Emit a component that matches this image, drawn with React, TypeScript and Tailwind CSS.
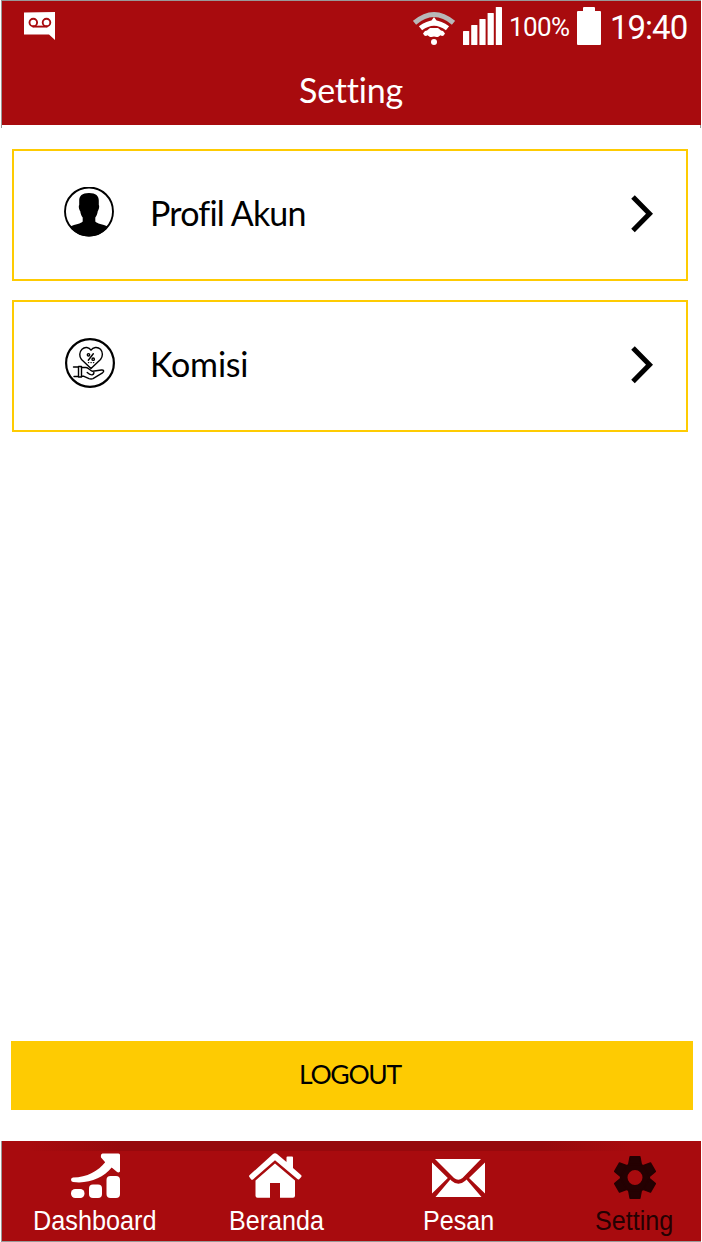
import type { ReactNode } from "react";

function Voicemail() {
  return (
    <svg width="32" height="28" viewBox="0 0 32 28" className="shrink-0">
      <path d="M0 .6L31 0V28l-6-5.4H0z" fill="#fff" />
      <g fill="none" stroke="#a80b0e" strokeWidth="1.9">
        <circle cx="9.300" cy="10.500" r="3.800" />
        <circle cx="22.500" cy="10.500" r="3.800" />
        <path d="M8.500 14.600h15" />
      </g>
    </svg>
  );
}

function Wifi() {
  return (
    <svg width="42" height="35" viewBox="0 0 42 35" className="shrink-0">
      <path d="M1.500 11.800Q21-4.800 40.500 11.800" fill="none" stroke="#b8b8b8" strokeWidth="5" />
      <path d="M7.500 17.300Q21 6.800 34.500 17.300" fill="none" stroke="#fff" strokeWidth="5.200" />
      <path d="M21 6l5 7h-10z" fill="#fff" />
      <path d="M17 17h8l3 2.500 2 .5 2 2.500q-2 4-4.500 1.800l-2.500 1.700h-1.500L21 25.500 18.500 26H17l-2.500-1.700q-2.500 2.200-4.500-1.800l2-2.500 2-.5z" fill="#fff" />
      <circle cx="21" cy="31" r="3" fill="#fff" />
    </svg>
  );
}

function Signal() {
  return (
    <svg width="39" height="38" viewBox="0 0 39 38" fill="#fff" className="ml-2 shrink-0">
      <rect x="0" y="24" width="6.200" height="14" rx=".6" />
      <rect x="8.200" y="18" width="6.200" height="20" rx=".6" />
      <rect x="16.400" y="12" width="6.200" height="26" rx=".6" />
      <rect x="24.600" y="6" width="6.200" height="32" rx=".6" />
      <rect x="32.800" y="0" width="6.200" height="38" rx=".6" />
    </svg>
  );
}

function Battery() {
  return (
    <svg width="24" height="38" viewBox="0 0 24 38" className="ml-2 shrink-0">
      <path d="M1 4h5V1q0-1 1-1h10q1 0 1 1v3h5q1 0 1 1v32q0 1-1 1H1q-1 0-1-1V5q0-1 1-1z" fill="#fff" />
    </svg>
  );
}

function Profile() {
  return (
    <svg width="50" height="50" viewBox="0 0 50 50">
      <circle cx="25" cy="24.500" r="24" fill="#fff" stroke="#000" strokeWidth="1.900" />
      <path
        d="M25 6c7 0 9.800 3 9.800 7.500v4.500c.8.700.3 4.700-1 6-.4 3-1.200 5-2.500 6.500v4c1.300 2 7.700 2.800 12.500 5C39.500 46 33 49.400 25 49.400S10.500 46 6.200 39.500c4.800-2.200 11.200-3 12.500-5v-4c-1.300-1.500-2.100-3.500-2.500-6.500-1.300-1.300-1.800-5.300-1-6v-4.500c0-4.500 2.800-7.500 9.800-7.500z"
        fill="#000"
      />
    </svg>
  );
}

function Commission() {
  return (
    <svg width="50" height="50" viewBox="0 0 50 50" fill="none" stroke="#000" strokeLinejoin="round" strokeLinecap="round" className="ml-px">
      <circle cx="25" cy="25" r="23.900" strokeWidth="2.200" />
      <path d="M26 30.500L16.500 21.500C14 18.500 14.200 14 17 11.200c3-2.800 7-2 9 1 2-3 6.500-3.800 9.500-1 2.500 2.800 2.500 7.300 0 10.300z" strokeWidth="1.400" />
      <g strokeWidth="1.400">
        <path d="M28.300 15.800l-5 6.400" />
        <circle cx="23.500" cy="16.800" r="1.200" />
        <circle cx="28.200" cy="21.200" r="1.200" />
        <path d="M23.500 24.600h.2M26 24.600h.2M28.500 24.600h.2" />
        <path d="M8.500 29h5M9 38.500h4.500M13.500 28.500h3v10.500h-3z" />
        <path d="M16.500 29.500h4.500c2.500 0 4.500 3.500 6.700 3.700 1.800.2 1.700 3.200-.5 3.600-2 .3-3.800-1-5-2.200M16.500 38.300h2.500l5 2.300c1.500.5 2.700.5 4 0l9.500-5.800c2-1.600 1.300-3-1-2.800l-9 1.200" />
      </g>
    </svg>
  );
}

function Chevron() {
  return (
    <svg width="24" height="40" viewBox="0 0 24 40" fill="none" stroke="#000" strokeWidth="5">
      <path d="M3 3L19.500 19.700 3 36.500" />
    </svg>
  );
}

function MenuCard({ icon, label, labelClass }: { icon: ReactNode; label: string; labelClass: string }) {
  return (
    <button className="flex h-[132px] w-full items-start border-2 border-[#fecb02] bg-white pl-[50px] pr-8 text-left">
      <span className="mt-9 w-[51px]">{icon}</span>
      <span className={labelClass}>{label}</span>
      <span className="ml-auto mt-[43px]">
        <Chevron />
      </span>
    </button>
  );
}

function Growth() {
  return (
    <svg width="50" height="46" viewBox="0 0 50 46" fill="#fff">
      <path d="M31.500.5H47.500q1.500 0 1.500 1.500v16.500q-1.500 1.800-3.200.3L40.700 14.600C32 25 18 31 2 29q-2-.2-2-2.200t2-2.200c14-.2 25.500-7 32.200-15.400L30 4.500q-.6-3.300 1.500-4z" />
      <rect y="36" width="13.500" height="9" rx="4.200" />
      <rect x="18" y="31.500" width="13" height="13.500" rx="4" />
      <rect x="35.500" y="23" width="13.500" height="22" rx="4" />
    </svg>
  );
}

function Home() {
  return (
    <svg width="53" height="46" viewBox="0 0 53 46" fill="#fff">
      <path d="M26 .3q1 0 2 .8l9.500 8V4.500q0-1 1-1H43q1 0 1 1v10.500l8 7q1 .9.200 2l-1.800 2q-1 1-2 .1L26 7.200 4 26.500q-1 .8-2-.2L.4 24q-.8-1 .3-2L24 1.100q1-.8 2-.8z" />
      <path d="M26 10.500L46 27.500v15.200q0 2-2 2H31V30H21v14.700H8.500q-2 0-2-2V27.500z" />
    </svg>
  );
}

function Mail() {
  return (
    <svg width="53" height="38" viewBox="0 0 53 38" fill="#fff">
      <path d="M3 0h46L30.500 19q-4.200 3.500-8.500 0zM0 3.500L15.800 19 0 34.500zM53 3.500L37 19l16 15.500zM18.300 20.500l1.200 1.200q6.900 6.200 13.800 0l1.200-1.200L49.500 38H3.500z" />
    </svg>
  );
}

function Gear() {
  return (
    <svg width="42" height="43" viewBox="-21 -21.5 42 43" fill="#240102" stroke="#240102" strokeLinejoin="round">
      <circle r="11.300" fill="none" strokeWidth="7.600" />
      <path
        d="M-6.300-13L-4.900-20.700H4.900L6.300-13zM-6.300 13L-4.900 20.700H4.900L6.300 13z"
        strokeWidth="1.400"
      />
      <path
        d="M-6.300-13L-4.900-20.700H4.900L6.300-13zM-6.300 13L-4.900 20.700H4.900L6.300 13z"
        strokeWidth="1.400"
        transform="rotate(60)"
      />
      <path
        d="M-6.300-13L-4.900-20.700H4.900L6.300-13zM-6.300 13L-4.900 20.700H4.900L6.300 13z"
        strokeWidth="1.400"
        transform="rotate(-60)"
      />
    </svg>
  );
}

export default function App() {
  return (
    <div className="flex h-[1242px] w-[702px] flex-col overflow-hidden bg-white font-['Lato',sans-serif] text-black">
      <div className="flex h-[128px] border-l border-white">
        <div className="w-px bg-[#999]" />
        <header className="h-[125px] w-[699px] border-t border-[#999] bg-[#a80b0e] text-white">
          <div className="flex h-[50px] items-start pl-[22px] pt-[6px] font-['Roboto',sans-serif]">
            <span className="mt-[5px]">
              <Voicemail />
            </span>
            <span className="ml-[357px] mt-1">
              <Wifi />
            </span>
            <Signal />
            <span className="ml-[7px] mt-1 w-[60px] whitespace-nowrap text-[26px] leading-8 tracking-[-0.6px]">100%</span>
            <Battery />
            <span className="ml-[9px] mt-px whitespace-nowrap text-[33px] leading-10 tracking-[-1px]">19:40</span>
          </div>
          <h1 className="mt-[19px] pl-[297px] text-[34px] leading-10 tracking-[-0.2px]">Setting</h1>
        </header>
        <div className="-ml-px mt-[125px] h-[3px] w-px bg-[#999]" />
      </div>

      <main className="flex flex-1 flex-col pl-3 pr-3.5 pt-[21px]">
        <div className="flex flex-col gap-[19px]">
          <MenuCard icon={<Profile />} label="Profil Akun" labelClass="ml-[35px] mt-[42px] text-[34px] leading-10 tracking-[-0.8px]" />
          <MenuCard icon={<Commission />} label="Komisi" labelClass="ml-[35px] mt-[42px] text-[34px] leading-10 tracking-[-0.2px]" />
        </div>
        <button className="-ml-px mb-[31px] mt-auto flex h-[69px] w-[682px] bg-[#fecb02] pl-[288px] pt-[17px] text-[26.5px] leading-8 tracking-[-1.3px]">
          LOGOUT
        </button>
      </main>

      <nav className="ml-px grid h-[101px] w-[700px] grid-cols-[192px_177px_184px_147px] border-b border-l border-[#999] bg-[#a80b0e] bg-[linear-gradient(to_right,#a80b0e_25px,#96090c_120px,#96090c_540px,#a80b0e_630px)] bg-[length:100%_10px] bg-no-repeat font-['Liberation_Sans',sans-serif] text-[27px] leading-8 text-white">
        <a className="flex flex-col items-start pt-3">
          <span className="ml-[69px] h-[52px]"><Growth /></span>
          <span className="ml-[31px] origin-left scale-x-[.935]">Dashboard</span>
        </a>
        <a className="flex flex-col items-start pt-3">
          <span className="ml-[55px] h-[52px]"><Home /></span>
          <span className="ml-[35px] origin-left scale-x-[.93]">Beranda</span>
        </a>
        <a className="flex flex-col items-start pt-[18px]">
          <span className="ml-[61px] h-[46px]"><Mail /></span>
          <span className="ml-[52px] origin-left scale-x-[.93]">Pesan</span>
        </a>
        <a className="flex flex-col items-start pt-[15px] text-[#240102]">
          <span className="ml-[59px] h-[49px]"><Gear /></span>
          <span className="ml-[40px] origin-left scale-x-[.93]">Setting</span>
        </a>
      </nav>
    </div>
  );
}
